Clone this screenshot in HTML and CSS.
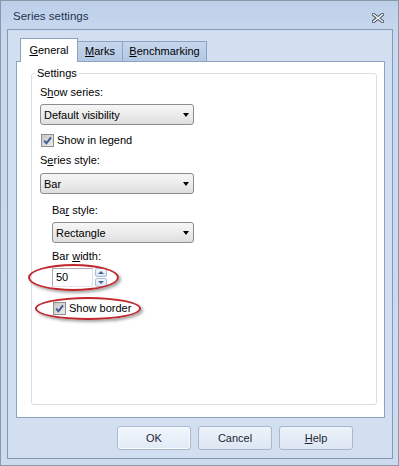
FILE: index.html
```html
<!DOCTYPE html>
<html lang="en">
<head>
    <meta charset="UTF-8">
    <meta name="viewport" content="width=device-width, initial-scale=1.0">
    <title>Series settings</title>
    <link rel="stylesheet" href="styles.css">
</head>
<body>
    <div class="window">
        <div class="titlebar">
            <span class="title">Series settings</span>
            <span class="close">
                <svg width="12" height="10" viewBox="0 0 12 10">
                    <path d="M1.5 1.5 L10.5 8.5 M10.5 1.5 L1.5 8.5" stroke="#4a5566" stroke-width="3.4" stroke-linecap="square"/>
                    <path d="M1.5 1.5 L10.5 8.5 M10.5 1.5 L1.5 8.5" stroke="#ffffff" stroke-width="1.4" stroke-linecap="square"/>
                </svg>
            </span>
        </div>
        <div class="frame">
            <div class="tabs">
                <div class="tab active"><u>G</u>eneral</div>
                <div class="tab tab-marks"><u>M</u>arks</div>
                <div class="tab tab-bench"><u>B</u>enchmarking</div>
            </div>
            <div class="panel">
                <fieldset class="group">
                    <legend>Settings</legend>
                    <div class="lbl">S<u>h</u>ow series:</div>
                    <div class="combo combo-first"><span>Default visibility</span><i class="arrow"></i></div>
                    <div class="check check-legend">
                        <span class="box"><svg width="11" height="11" viewBox="0 0 11 11"><path d="M2.2 5.6 L4.4 8.3 L9 2.4" stroke="#3d5790" stroke-width="1.9" fill="none"/></svg></span>
                        Show in legend
                    </div>
                    <div class="lbl lbl-style">S<u>e</u>ries style:</div>
                    <div class="combo combo-second"><span>Bar</span><i class="arrow"></i></div>
                    <div class="indent">
                        <div class="lbl lbl-bar">Ba<u>r</u> style:</div>
                        <div class="combo combo-second"><span>Rectangle</span><i class="arrow"></i></div>
                        <div class="lbl lbl-width">Bar <u>w</u>idth:</div>
                        <div class="spin">
                            <div class="spin-input">50</div>
                            <div class="spin-btns">
                                <span class="spin-btn"><i class="tri-up"></i></span>
                                <span class="spin-btn"><i class="tri-down"></i></span>
                            </div>
                        </div>
                        <div class="check check-border">
                            <span class="box"><svg width="11" height="11" viewBox="0 0 11 11"><path d="M2.2 5.6 L4.4 8.3 L9 2.4" stroke="#3d5790" stroke-width="1.9" fill="none"/></svg></span>
                            Show border
                        </div>
                    </div>
                </fieldset>
            </div>
            <div class="buttons">
                <div class="btn focused">OK</div>
                <div class="btn">Cancel</div>
                <div class="btn"><u>H</u>elp</div>
            </div>
        </div>
        <div class="mark mark-width"></div>
        <div class="mark mark-border"></div>
    </div>
</body>
</html>
```

FILE: styles.css
```css
body {
    margin: 0;
    font-family: "Liberation Sans", Arial, sans-serif;
    font-size: 11px;
    color: #000;
}
u {
    text-decoration: underline;
    text-underline-offset: 1px;
}
.window {
    position: relative;
    box-sizing: border-box;
    width: 399px;
    height: 466px;
    border: 1px solid #8c98a8;
    background: linear-gradient(#bdd0ea, #c9d9ee 40px, #cddbee);
    display: flex;
    flex-direction: column;
}
.titlebar {
    height: 28px;
    box-sizing: border-box;
    padding: 8px 14px 0 12px;
    display: flex;
    justify-content: space-between;
    align-items: flex-start;
}
.title {
    font-size: 11.5px;
    line-height: 14px;
    color: #22334d;
}
.close {
    margin-top: 4px;
    display: flex;
}
.frame {
    flex: 1;
    margin: 0 5px 6px 6px;
    border: 1px solid #8599b8;
    background: #d2dff0;
    padding: 8px 7px 8px 8px;
    display: flex;
    flex-direction: column;
}
.tabs {
    display: flex;
    align-items: flex-end;
    padding-left: 4px;
}
.tab {
    box-sizing: border-box;
    height: 20px;
    line-height: 18px;
    text-align: center;
    border: 1px solid #8ea3c1;
    border-bottom: none;
    background: linear-gradient(#c6d6ec, #b4c8e3);
    margin-left: -1px;
}
.tab.active {
    position: relative;
    z-index: 1;
    width: 58px;
    height: 24px;
    line-height: 22px;
    margin-left: 0;
    margin-bottom: -1px;
    background: #fff;
    padding-bottom: 2px;
}
.tab-marks {
    width: 46px;
}
.tab-bench {
    width: 85px;
}
.panel {
    flex: 1;
    border: 1px solid #8ea3c1;
    background: #fff;
    padding: 5px 7px 12px 14px;
    display: flex;
}
.group {
    flex: 1;
    margin: 0;
    min-width: 0;
    border: 1px solid #d6dfe6;
    border-radius: 3px;
    padding: 6px 8px 0 8px;
    display: flex;
    flex-direction: column;
}
.group legend {
    margin-left: -5px;
    padding: 0 2px;
    line-height: 13px;
}
.lbl {
    line-height: 13px;
    height: 13px;
}
.combo {
    box-sizing: border-box;
    height: 21px;
    border: 1px solid #8a8d92;
    border-radius: 3px;
    background: linear-gradient(#f6f6f6, #ececec 50%, #dedede);
    display: flex;
    align-items: center;
    justify-content: space-between;
    padding: 0 4px 0 3px;
    margin-top: 5px;
}
.combo-first {
    width: 154px;
}
.combo-second {
    width: 154px;
}
.indent .combo-second {
    width: 142px;
}
.arrow {
    width: 0;
    height: 0;
    border-left: 3.5px solid transparent;
    border-right: 3.5px solid transparent;
    border-top: 4px solid #000;
}
.check {
    display: flex;
    align-items: center;
    gap: 3px;
    height: 13px;
    line-height: 13px;
    padding-left: 1px;
}
.check-legend {
    margin-top: 9px;
}
.check-border {
    margin-top: 15px;
}
.box {
    box-sizing: border-box;
    width: 13px;
    height: 13px;
    border: 1px solid #8e8f8f;
    background: linear-gradient(135deg, #c6c6c6, #ececec);
    display: flex;
    align-items: center;
    justify-content: center;
}
.lbl-style {
    margin-top: 7px;
}
.combo-second {
    margin-top: 6px;
}
.indent {
    padding-left: 12px;
    display: flex;
    flex-direction: column;
}
.lbl-bar {
    margin-top: 10px;
}
.indent .combo-second {
    margin-top: 5px;
}
.lbl-width {
    margin-top: 7px;
}
.spin {
    margin-top: 5px;
    display: flex;
    gap: 2px;
    height: 19px;
}
.spin-input {
    box-sizing: border-box;
    width: 41px;
    height: 19px;
    border: 1px solid #abadb3;
    border-right-color: #dbdfe6;
    border-bottom-color: #e3e9ef;
    line-height: 17px;
    padding-left: 3px;
}
.spin-btns {
    display: flex;
    flex-direction: column;
    justify-content: space-between;
}
.spin-btn {
    box-sizing: border-box;
    width: 12px;
    height: 9px;
    border: 1px solid #a9bcd5;
    border-radius: 2px;
    background: linear-gradient(#f3f7fc, #dce6f3);
    display: flex;
    align-items: center;
    justify-content: center;
}
.tri-up {
    border-left: 3px solid transparent;
    border-right: 3px solid transparent;
    border-bottom: 3px solid #44649c;
}
.tri-down {
    border-left: 3px solid transparent;
    border-right: 3px solid transparent;
    border-top: 3px solid #44649c;
}
.buttons {
    display: flex;
    justify-content: flex-end;
    gap: 7px;
    margin-top: 8px;
    padding-right: 32px;
}
.btn {
    box-sizing: border-box;
    width: 74px;
    height: 24px;
    line-height: 22px;
    text-align: center;
    border: 1px solid #a8b7cc;
    border-radius: 3px;
    background: linear-gradient(#eef3fa, #dce6f2);
    color: #1c2636;
}
.btn.focused {
    box-shadow: inset 0 0 0 1px #f8fbff;
    background: linear-gradient(#f1f6fc, #e1eaf5);
}
.mark {
    position: absolute;
    box-sizing: border-box;
    border: 2px solid #c0272d;
    border-radius: 50%;
    box-shadow: 2px 2px 3px rgba(0, 0, 0, 0.35);
}
.mark-width {
    left: 27px;
    top: 263px;
    width: 91px;
    height: 27px;
}
.mark-border {
    left: 34px;
    top: 296px;
    width: 106px;
    height: 23px;
}
```
